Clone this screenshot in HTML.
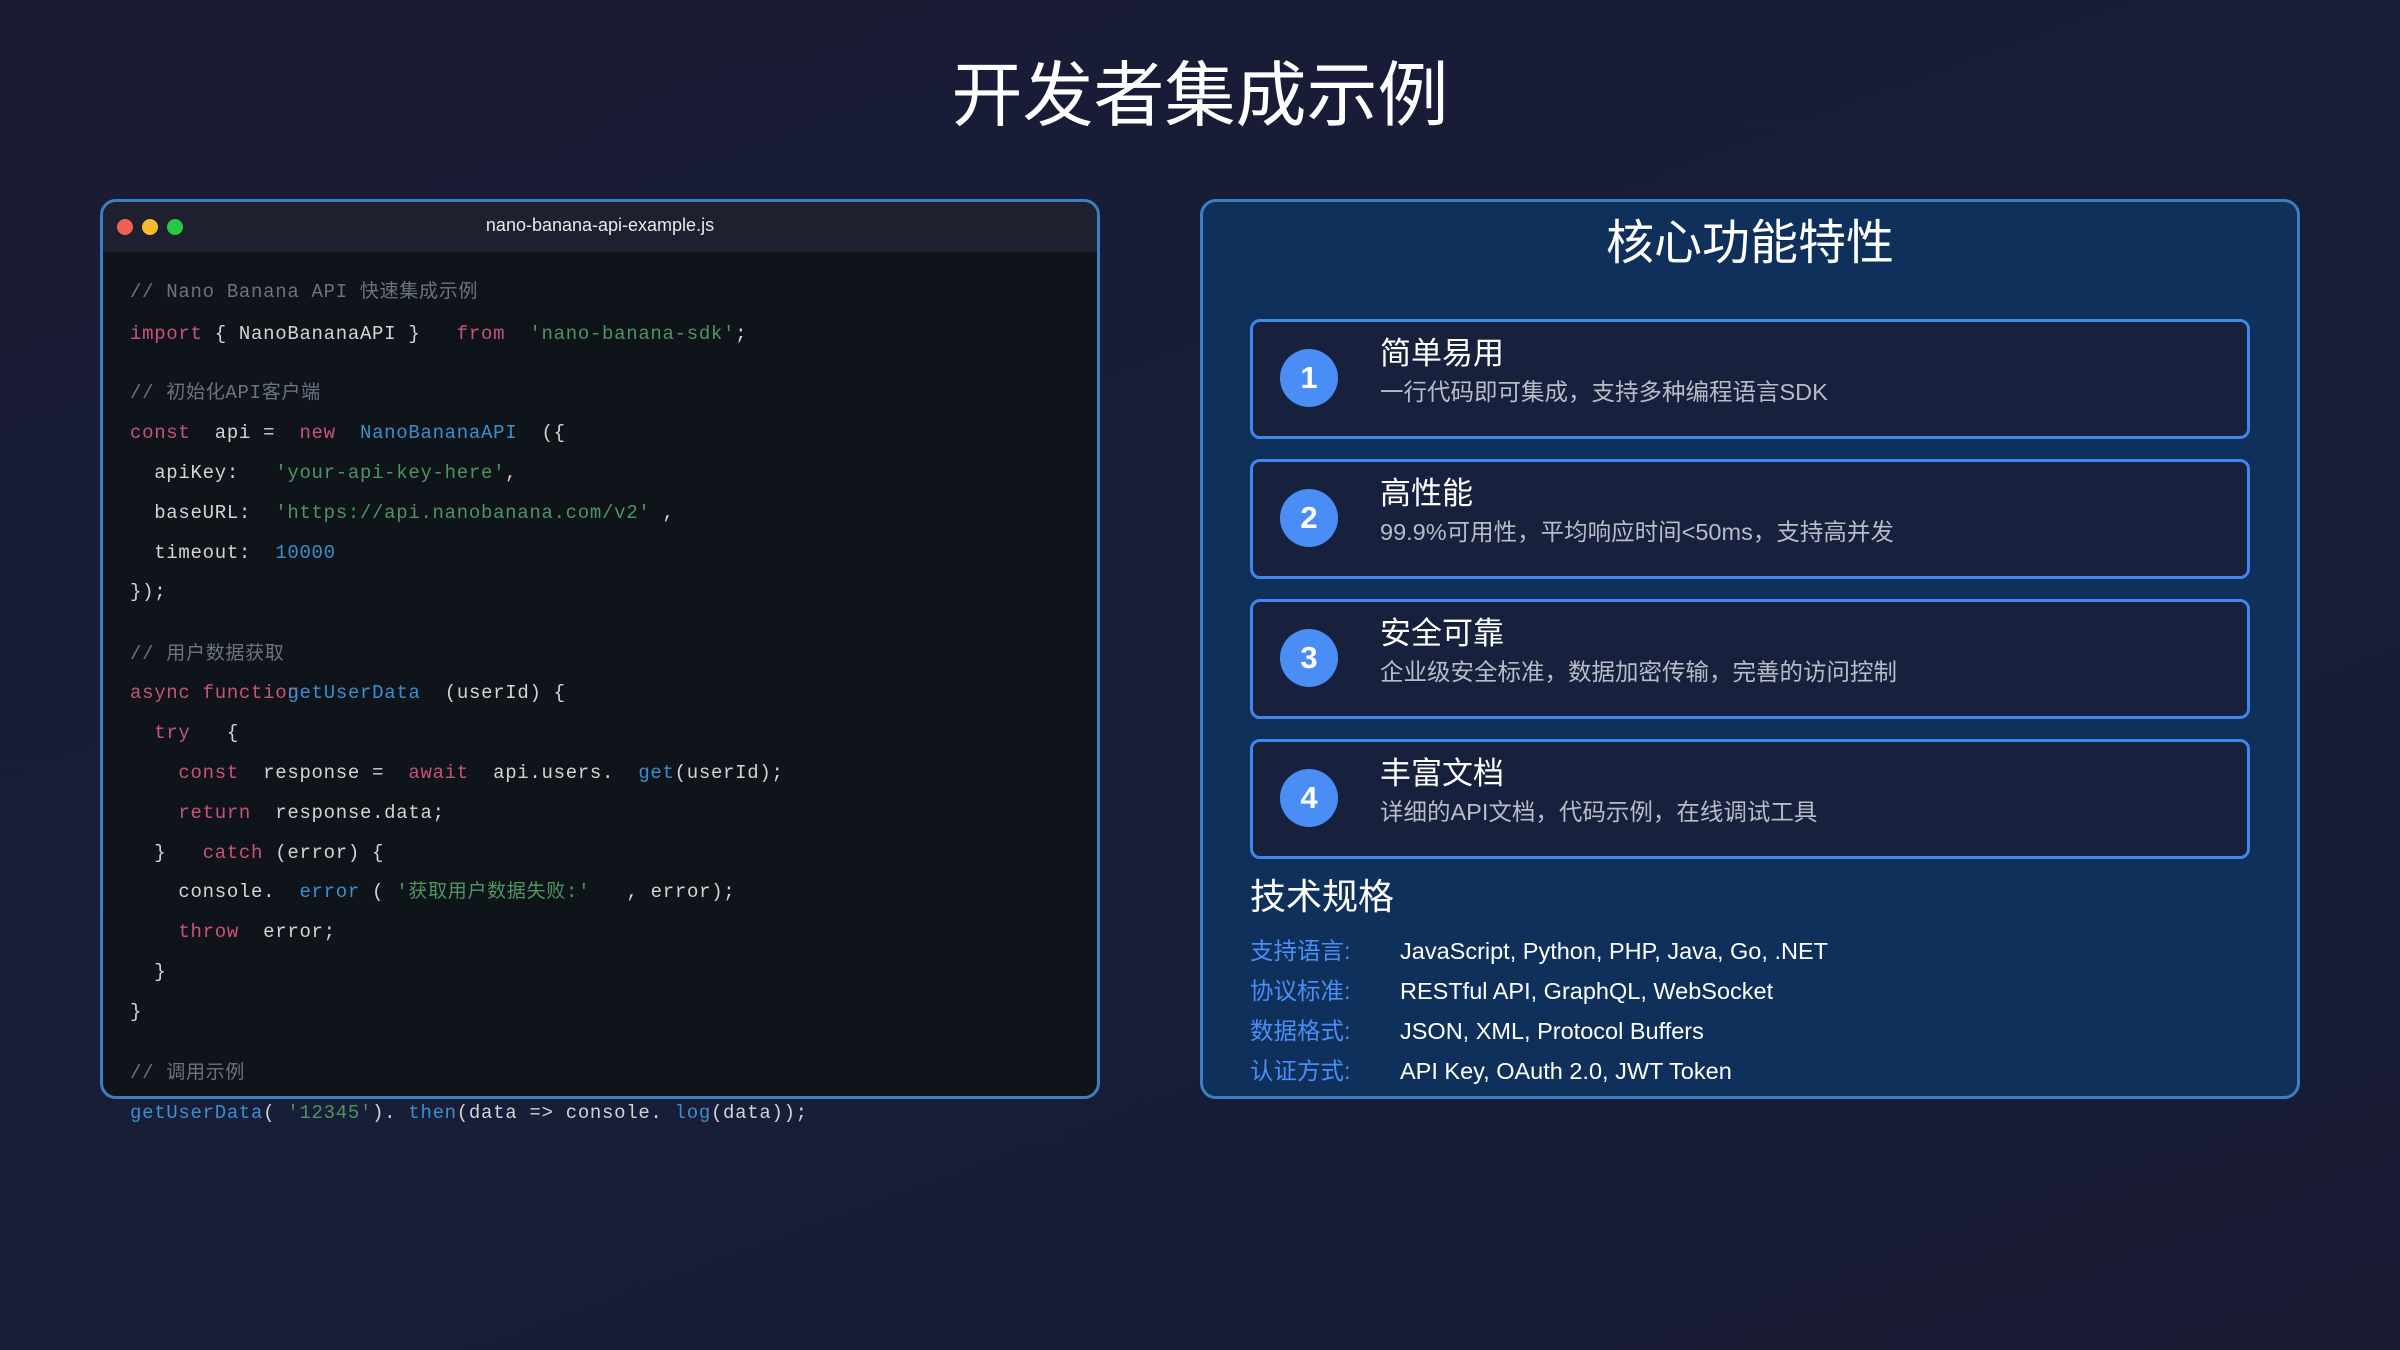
<!DOCTYPE html>
<html><head><meta charset="utf-8"><style>
*{margin:0;padding:0;box-sizing:border-box}
body{width:2400px;height:1350px;overflow:hidden;background:linear-gradient(160deg,#1a1c36 0%,#181d38 60%,#1a1b35 100%);font-family:"Liberation Sans","Noto Sans CJK SC",sans-serif;color:#fff;position:relative}
.title{position:absolute;top:49px;left:0;width:2400px;text-align:center;font-size:71px;line-height:96px;color:#fff}
.code{position:absolute;left:100px;top:199px;width:1000px;height:900px;background:#0f141b;border:3px solid #3a7fc4;border-radius:16px;overflow:visible}
.hdr{position:absolute;left:0;top:0;width:994px;height:50px;background:#1e2030;border-radius:14px 14px 0 0}
.dot{position:absolute;top:17px;width:16px;height:16px;border-radius:50%}
.fname{position:absolute;left:0;width:994px;top:13px;text-align:center;font-size:18px;color:#e8e8e8}
.ln{position:absolute;left:130px;height:40px;line-height:40px;font-family:"Liberation Mono","Noto Sans CJK SC",monospace;font-size:19px;letter-spacing:0.7px;color:#d4d4d4;white-space:pre}
.c{color:#6b7280}.k{color:#c9527a}.s{color:#4f9460}.f{color:#3a8fcc}.n{color:#3a8fcc}
.panel{position:absolute;left:1200px;top:199px;width:1100px;height:900px;background:#10305c;border:3px solid #3a7fc4;border-radius:16px}
.ptitle{position:absolute;left:1200px;top:214px;width:1100px;text-align:center;font-size:48px;line-height:60px}
.card{position:absolute;left:1250px;width:1000px;height:120px;background:#17203d;border:3px solid #3f86ef;border-radius:10px}
.circ{position:absolute;left:1280px;width:58px;height:58px;border-radius:50%;background:#4a8ef5;color:#fff;font-weight:bold;font-size:31px;line-height:58px;text-align:center}
.ct{position:absolute;left:1380px;font-size:31px;line-height:40px}
.cd{position:absolute;left:1380px;font-size:23.5px;line-height:30px;color:#b8bcc8}
.h2{position:absolute;left:1250px;top:873px;font-size:36px;line-height:48px}
.lab{position:absolute;left:1250px;font-size:23.5px;line-height:30px;color:#4a8ef5}
.val{position:absolute;left:1400px;font-size:23.5px;line-height:30px;color:#fff}
</style></head><body>
<div class="title">开发者集成示例</div>

<div class="code">
<div class="hdr"></div>
<div class="dot" style="left:14px;background:#f25f57"></div>
<div class="dot" style="left:39px;background:#f9bb2e"></div>
<div class="dot" style="left:64px;background:#2ac840"></div>
<div class="fname">nano-banana-api-example.js</div>
</div>
<div class="ln c" style="top:272px">// Nano Banana API 快速集成示例</div>
<div class="ln" style="top:314px"><span class="k">import</span> { NanoBananaAPI }   <span class="k">from</span>  <span class="s">'nano-banana-sdk'</span>;</div>
<div class="ln c" style="top:373px">// 初始化API客户端</div>
<div class="ln" style="top:413px"><span class="k">const</span>  api =  <span class="k">new</span>  <span class="f">NanoBananaAPI</span>  ({</div>
<div class="ln" style="top:453px">  apiKey:   <span class="s">'your-api-key-here'</span>,</div>
<div class="ln" style="top:493px">  baseURL:  <span class="s">'https://api.nanobanana.com/v2'</span> ,</div>
<div class="ln" style="top:533px">  timeout:  <span class="n">10000</span></div>
<div class="ln" style="top:572px">});</div>
<div class="ln c" style="top:634px">// 用户数据获取</div>
<div class="ln" style="top:673px"><span class="k">async function</span><span class="f" style="margin-left:-12px">getUserData</span>  (userId) {</div>
<div class="ln" style="top:713px">  <span class="k">try</span>   {</div>
<div class="ln" style="top:753px">    <span class="k">const</span>  response =  <span class="k">await</span>  api.users.  <span class="f">get</span>(userId);</div>
<div class="ln" style="top:793px">    <span class="k">return</span>  response.data;</div>
<div class="ln" style="top:833px">  }   <span class="k">catch</span> (error) {</div>
<div class="ln" style="top:872px">    console.  <span class="f">error</span> ( <span class="s">'获取用户数据失败:'</span>   , error);</div>
<div class="ln" style="top:912px">    <span class="k">throw</span>  error;</div>
<div class="ln" style="top:952px">  }</div>
<div class="ln" style="top:992px">}</div>
<div class="ln c" style="top:1053px">// 调用示例</div>
<div class="ln" style="top:1093px"><span class="f">getUserData</span>( <span class="s">'12345'</span>). <span class="f">then</span>(data =&gt; console. <span class="f">log</span>(data));</div>

<div class="panel"></div>
<div class="ptitle">核心功能特性</div>

<div class="card" style="top:319px"></div>
<div class="circ" style="top:349px">1</div>
<div class="ct" style="top:334px">简单易用</div>
<div class="cd" style="top:377px">一行代码即可集成，支持多种编程语言SDK</div>

<div class="card" style="top:459px"></div>
<div class="circ" style="top:489px">2</div>
<div class="ct" style="top:474px">高性能</div>
<div class="cd" style="top:517px">99.9%可用性，平均响应时间&lt;50ms，支持高并发</div>

<div class="card" style="top:599px"></div>
<div class="circ" style="top:629px">3</div>
<div class="ct" style="top:614px">安全可靠</div>
<div class="cd" style="top:657px">企业级安全标准，数据加密传输，完善的访问控制</div>

<div class="card" style="top:739px"></div>
<div class="circ" style="top:769px">4</div>
<div class="ct" style="top:754px">丰富文档</div>
<div class="cd" style="top:797px">详细的API文档，代码示例，在线调试工具</div>

<div class="h2">技术规格</div>
<div class="lab" style="top:936px">支持语言:</div><div class="val" style="top:936px">JavaScript, Python, PHP, Java, Go, .NET</div>
<div class="lab" style="top:976px">协议标准:</div><div class="val" style="top:976px">RESTful API, GraphQL, WebSocket</div>
<div class="lab" style="top:1016px">数据格式:</div><div class="val" style="top:1016px">JSON, XML, Protocol Buffers</div>
<div class="lab" style="top:1056px">认证方式:</div><div class="val" style="top:1056px">API Key, OAuth 2.0, JWT Token</div>
</body></html>
